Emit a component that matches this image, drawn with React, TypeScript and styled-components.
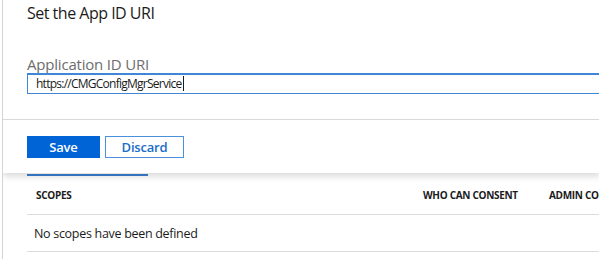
import React from 'react';
import styled, { createGlobalStyle } from 'styled-components';

const GlobalStyle = createGlobalStyle`
    html, body {
        margin: 0;
        padding: 0;
        background: #ffffff;
        overflow: hidden;
    }
    body {
        font-family: 'Segoe UI', 'Open Sans', 'Noto Sans', sans-serif;
        color: #1b1b1b;
    }
`;

const Page = styled.div`
    width: 597px;
    height: 259px;
    margin-left: 2px;
    border-left: 1px solid #d4d4d4;
    overflow: hidden;
    background: #fff;
`;

const Panel = styled.section`
    position: relative;
    z-index: 2;
    height: 173px;
    background: #fff;
    box-shadow: 0 3px 7px rgba(0, 0, 0, 0.16);
    overflow: hidden;
`;

const Body = styled.div`
    height: 120px;
    padding: 2px 0 0 24px;
    box-sizing: border-box;
    border-bottom: 1px solid #d9d9d9;
`;

const Title = styled.h2`
    margin: 0;
    font-size: 16px;
    font-weight: 400;
    line-height: 23px;
    letter-spacing: -0.5px;
    color: #1b1b1b;
`;

const Field = styled.label`
    display: flex;
    flex-direction: column;
    margin-top: 30px;
`;

const FieldLabel = styled.span`
    font-size: 15px;
    line-height: 18px;
    letter-spacing: -0.2px;
    color: #6d6d6d;
`;

const Input = styled.div`
    width: 640px;
    height: 21px;
    box-sizing: border-box;
    border: 1px solid #3f86d6;
    border-top-width: 2px;
    padding-left: 8px;
    font-size: 12px;
    line-height: 18px;
    letter-spacing: -0.75px;
    color: #1b1b1b;

    &::after {
        content: '';
        display: inline-block;
        width: 1px;
        height: 15px;
        margin-left: 2px;
        vertical-align: -3px;
        background: #1b1b1b;
    }
`;

const Footer = styled.div`
    display: flex;
    gap: 5px;
    padding: 16px 0 0 24px;
`;

const Button = styled.button<{ primary?: boolean }>`
    height: 22px;
    box-sizing: border-box;
    font-family: inherit;
    font-size: 13px;
    font-weight: 600;
    line-height: 18px;
    letter-spacing: -0.2px;
    padding: 0;
    border: 1px solid ${({ primary }) => (primary ? '#0063d6' : '#4a90dc')};
    background: ${({ primary }) => (primary ? '#0063d6' : '#ffffff')};
    color: ${({ primary }) => (primary ? '#ffffff' : '#1a6dc8')};
`;

const TabStrip = styled.div`
    height: 2px;
    padding-left: 24px;
    margin-top: 1px;
`;

const TabUnderline = styled.div`
    width: 121px;
    height: 2px;
    background: #3a7fcf;
`;

const Table = styled.div`
    margin: 0 0 0 24px;
    white-space: nowrap;
`;

const Row = styled.div<{ head?: boolean }>`
    display: grid;
    grid-template-columns: 387px 126px 200px;
    height: ${({ head }) => (head ? '38px' : '36px')};
    align-items: center;
    border-bottom: 1px solid #dcdcdc;
`;

const HeadCell = styled.div`
    padding-left: 9px;
    font-size: 10px;
    font-weight: 700;
    letter-spacing: -0.3px;
    color: #1b1b1b;
`;

const Cell = styled.div`
    padding-left: 7px;
    font-size: 12.5px;
    letter-spacing: -0.3px;
    color: #1b1b1b;
`;

const App = () => {
    const columns = ['Scopes', 'Who can consent', 'Admin consent required'];

    return (
        <>
            <GlobalStyle />
            <Page>
                <Panel>
                    <Body>
                        <Title>Set the App ID URI</Title>
                        <Field>
                            <FieldLabel>Application ID URI</FieldLabel>
                            <Input>https://CMGConfigMgrService</Input>
                        </Field>
                    </Body>
                    <Footer>
                        <Button primary style={{ width: 73 }}>
                            Save
                        </Button>
                        <Button style={{ width: 79 }}>Discard</Button>
                    </Footer>
                </Panel>
                <TabStrip>
                    <TabUnderline />
                </TabStrip>
                <Table>
                    <Row head>
                        {columns.map((col) => (
                            <HeadCell key={col}>{col.toUpperCase()}</HeadCell>
                        ))}
                    </Row>
                    <Row>
                        <Cell>No scopes have been defined</Cell>
                    </Row>
                </Table>
            </Page>
        </>
    );
};

export default App;
